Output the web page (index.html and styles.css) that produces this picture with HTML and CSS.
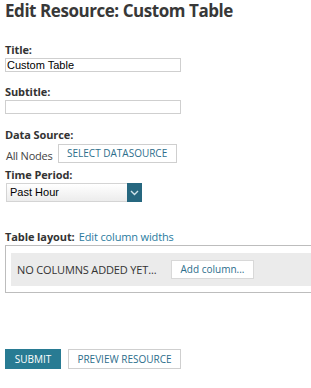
FILE: index.html
```html
<!DOCTYPE html>
<html>
<head>
<meta charset="utf-8">
<link rel="stylesheet" href="styles.css">
</head>
<body>
<div class="page">
  <h1 class="title">Edit Resource: Custom Table</h1>

  <div class="field f-title">
    <label class="lbl">Title:</label>
    <input class="txt" type="text" value="Custom Table">
  </div>

  <div class="field f-subtitle">
    <label class="lbl">Subtitle:</label>
    <input class="txt" type="text" value="">
  </div>

  <div class="field f-ds">
    <label class="lbl">Data Source:</label>
    <div class="ds-row">
      <span class="ds-val">All Nodes</span>
      <button class="btn-outline btn-ds">SELECT DATASOURCE</button>
    </div>
  </div>

  <div class="field f-time">
    <label class="lbl">Time Period:</label>
    <div class="select">
      <span class="select-val">Past Hour</span>
      <span class="select-arrow">
        <svg width="9" height="6" viewBox="0 0 9 6"><path d="M1 1 L4.5 4.5 L8 1" fill="none" stroke="#cfe3ea" stroke-width="1.4"/></svg>
      </span>
    </div>
  </div>

  <div class="layout-head">
    <span class="lbl-inline">Table layout:</span>
    <a class="link" href="#">Edit column widths</a>
  </div>
  <div class="layout-box">
    <div class="layout-inner">
      <span class="no-cols">NO COLUMNS ADDED YET...</span>
      <button class="btn-add">Add column...</button>
    </div>
  </div>

  <div class="actions">
    <button class="btn-submit">SUBMIT</button>
    <button class="btn-outline btn-preview">PREVIEW RESOURCE</button>
  </div>
</div>
</body>
</html>
```

FILE: styles.css
```css
html, body {
  margin: 0;
  padding: 0;
  background: #fff;
}
body {
  font-family: "Open Sans", "Liberation Sans", sans-serif;
  color: #333;
  overflow: hidden;
}
.page {
  padding: 1px 0 0 5px;
}
.title {
  margin: 0;
  font-size: 17px;
  line-height: 20px;
  font-weight: 700;
  color: #383838;
  letter-spacing: -0.45px;
}
.field {
  display: flex;
  flex-direction: column;
  align-items: flex-start;
}
.lbl, .lbl-inline {
  font-size: 11px;
  line-height: 14px;
  font-weight: 700;
  color: #333;
  letter-spacing: -0.1px;
}
.lbl {
  display: block;
  margin-bottom: 1px;
}
.f-title { margin-top: 22px; }
.f-subtitle { margin-top: 13px; }
.f-ds { margin-top: 14px; }
.f-time { margin-top: 5px; }

.txt {
  box-sizing: border-box;
  width: 176px;
  height: 14px;
  margin: 0;
  padding: 0 1px;
  border: 1px solid #cfcfcf;
  font-family: "Liberation Sans", Arial, sans-serif;
  font-size: 11px;
  color: #000;
  outline: none;
}
.ds-row {
  display: flex;
  align-items: center;
  margin-top: 1px;
}
.ds-val {
  font-size: 11px;
  color: #444;
  margin-left: 1px;
  margin-right: 5px;
  padding-top: 3px;
  letter-spacing: -0.2px;
}
.btn-outline {
  box-sizing: border-box;
  margin: 0;
  background: #fff;
  border: 1px solid #cfcfcf;
  font-family: "Open Sans", "Liberation Sans", sans-serif;
  font-size: 10px;
  color: #2d6e8c;
  padding: 0;
  cursor: pointer;
}
.btn-ds {
  width: 119px;
  height: 19px;
  line-height: 17px;
}
.select {
  box-sizing: border-box;
  width: 136px;
  height: 19px;
  margin-left: 1px;
  border: 1px solid #d4d4d4;
  border-right: none;
  display: flex;
  align-items: stretch;
  background: linear-gradient(#ffffff, #ececec);
}
.select-val {
  flex: 1;
  font-family: "Liberation Sans", Arial, sans-serif;
  font-size: 11px;
  line-height: 17px;
  color: #000;
  padding-left: 3px;
}
.select-arrow {
  width: 15px;
  margin-top: -1px;
  margin-bottom: -1px;
  background: #26677f;
  display: flex;
  align-items: center;
  justify-content: center;
}
.layout-head {
  margin-top: 26px;
  line-height: 14px;
}
.link {
  font-size: 11px;
  color: #2a7ba0;
  text-decoration: none;
  letter-spacing: -0.15px;
}
.layout-box {
  margin-top: 1px;
  border: 1px solid #bdbdbd;
  border-right: none;
  padding: 7px 0 6px 5px;
}
.layout-inner {
  background: #ebebeb;
  height: 33px;
  display: flex;
  align-items: center;
  padding-left: 6px;
}
.no-cols {
  font-size: 11px;
  color: #333;
  width: 154px;
  letter-spacing: -0.15px;
}
.btn-add {
  box-sizing: border-box;
  width: 83px;
  height: 19px;
  margin: 0;
  padding: 0;
  background: #fff;
  border: 1px solid #d8d8d8;
  font-family: "Open Sans", "Liberation Sans", sans-serif;
  font-size: 10px;
  color: #2d6e8c;
  line-height: 17px;
}
.actions {
  margin-top: 56px;
  display: flex;
  gap: 7px;
}
.btn-submit {
  box-sizing: border-box;
  width: 56px;
  height: 20px;
  margin: 0;
  padding: 0;
  border: none;
  background: #287b93;
  color: #fff;
  font-family: "Open Sans", "Liberation Sans", sans-serif;
  font-size: 10px;
}
.btn-preview {
  width: 113px;
  height: 20px;
}
```
